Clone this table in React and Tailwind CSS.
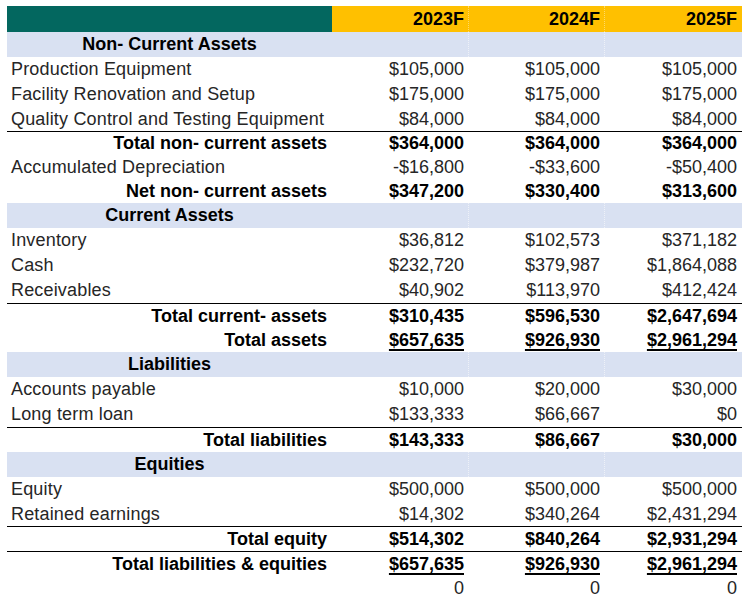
const rows = [
  { type: "section", label: "Non- Current Assets", h: "h-[25px]" },
  { type: "item", label: "Production Equipment", values: ["$105,000", "$105,000", "$105,000"], h: "h-[25px]" },
  { type: "item", label: "Facility Renovation and Setup", values: ["$175,000", "$175,000", "$175,000"], h: "h-[25px]" },
  { type: "item", label: "Quality Control and Testing Equipment", values: ["$84,000", "$84,000", "$84,000"], h: "h-[24px]" },
  { type: "total", label: "Total non- current assets", values: ["$364,000", "$364,000", "$364,000"], line: true, h: "h-[24px]" },
  { type: "item", label: "Accumulated Depreciation", values: ["-$16,800", "-$33,600", "-$50,400"], h: "h-[24px]" },
  { type: "total", label: "Net non- current assets", values: ["$347,200", "$330,400", "$313,600"], h: "h-[24px]" },
  { type: "section", label: "Current Assets", h: "h-[25px]" },
  { type: "item", label: "Inventory", values: ["$36,812", "$102,573", "$371,182"], h: "h-[25px]" },
  { type: "item", label: "Cash", values: ["$232,720", "$379,987", "$1,864,088"], h: "h-[25px]" },
  { type: "item", label: "Receivables", values: ["$40,902", "$113,970", "$412,424"], h: "h-[25px]" },
  { type: "total", label: "Total current- assets", values: ["$310,435", "$596,530", "$2,647,694"], line: true, h: "h-[25px]" },
  { type: "total", label: "Total assets", values: ["$657,635", "$926,930", "$2,961,294"], underline: true, h: "h-[24px]" },
  { type: "section", label: "Liabilities", h: "h-[25px]" },
  { type: "item", label: "Accounts payable", values: ["$10,000", "$20,000", "$30,000"], h: "h-[25px]" },
  { type: "item", label: "Long term loan", values: ["$133,333", "$66,667", "$0"], h: "h-[25px]" },
  { type: "total", label: "Total liabilities", values: ["$143,333", "$86,667", "$30,000"], line: true, h: "h-[25px]" },
  { type: "section", label: "Equities", h: "h-[25px]" },
  { type: "item", label: "Equity", values: ["$500,000", "$500,000", "$500,000"], h: "h-[25px]" },
  { type: "item", label: "Retained earnings", values: ["$14,302", "$340,264", "$2,431,294"], h: "h-[24px]" },
  { type: "total", label: "Total equity", values: ["$514,302", "$840,264", "$2,931,294"], line: true, h: "h-[25px]" },
  { type: "total", label: "Total liabilities & equities", values: ["$657,635", "$926,930", "$2,961,294"], line: true, underline: true, h: "h-[25px]" },
  { type: "item", label: "", values: ["0", "0", "0"], h: "h-[24px]" },
];

const years = ["2023F", "2024F", "2025F"];

function Row({ row }) {
  if (row.type === "section") {
    return (
      <div className={`grid grid-cols-[325px_136px_136px_138px] bg-[#d9e1f2] ${row.h}`}>
        <div className="flex items-center justify-center pb-px font-bold text-black">{row.label}</div>
        <div />
        <div className="border-l border-dotted border-[#eef1f8]" />
        <div className="border-l border-dotted border-[#eef1f8]" />
      </div>
    );
  }

  const total = row.type === "total";
  return (
    <div
      className={`grid grid-cols-[325px_136px_136px_138px] pb-px ${row.h} ${
        row.line ? "border-t border-black" : ""
      } ${total ? "font-bold text-black" : "text-[#262626]"}`}
    >
      <div className={`flex items-center ${total ? "justify-end pr-[5px]" : "pl-1 tracking-[0.17px]"}`}>
        {row.label}
      </div>
      {row.values.map((v, i) => (
        <div key={i} className={`flex items-center justify-end ${i === 2 ? "pr-[5px]" : "pr-1"}`}>
          <span className={row.underline ? "underline decoration-[1.5px] underline-offset-[3px]" : ""}>{v}</span>
        </div>
      ))}
    </div>
  );
}

export default function App() {
  return (
    <div className="h-[605px] w-[742px] bg-white pl-[7px] pt-[6px] font-['Liberation_Sans',Arial,sans-serif] text-[18px] leading-none">
      <div className="grid h-[26px] grid-cols-[325px_136px_136px_138px] font-bold text-black">
        <div className="bg-[#03675f]" />
        {years.map((y, i) => (
          <div
            key={y}
            className={`flex items-center justify-end bg-[#ffc000] ${i === 2 ? "pr-[5px]" : "pr-1"} ${
              i > 0 ? "border-l border-dotted border-[#ffd966]" : ""
            }`}
          >
            {y}
          </div>
        ))}
      </div>
      {rows.map((row, i) => (
        <Row key={i} row={row} />
      ))}
    </div>
  );
}
